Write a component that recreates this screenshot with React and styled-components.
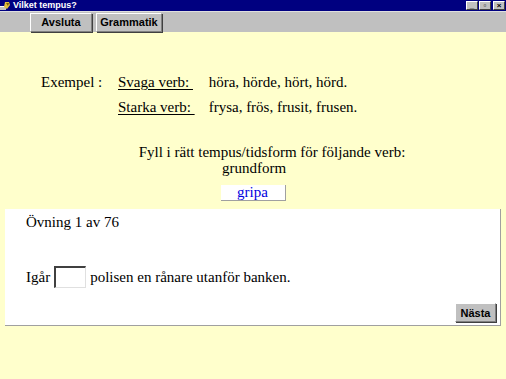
import React, { useState } from 'react';
import styled, { createGlobalStyle } from 'styled-components';

const GlobalStyle = createGlobalStyle`
  html, body { margin: 0; padding: 0; }
  body { background: #ffffcc; overflow: hidden; }
`;

const Window = styled.div`
  width: 506px;
  height: 379px;
  display: flex;
  flex-direction: column;
  background: #ffffcc;
  font-family: "Liberation Serif", "DejaVu Serif", "Times New Roman", serif;
  color: #000;
`;

const TitleBar = styled.div`
  height: 11px;
  background: #000080;
  display: flex;
  align-items: center;
  justify-content: space-between;
  padding: 0 1px 0 0;
  border-bottom: 1px solid #dfdfdf;
`;

const Title = styled.div`
  display: flex;
  align-items: center;
  gap: 2px;
  color: #fff;
  font-family: "Liberation Sans", Arial, sans-serif;
  font-size: 9px;
  font-weight: bold;
  line-height: 11px;
`;

const WinButtons = styled.div`
  display: flex;
  gap: 1px;
`;

const WinButton = styled.div`
  width: 12px;
  height: 9px;
  background: #c0c0c0;
  border-top: 1px solid #fff;
  border-left: 1px solid #fff;
  border-right: 1px solid #404040;
  border-bottom: 1px solid #404040;
  box-sizing: border-box;
  margin-left: ${({ $gap }) => $gap || 0}px;
  display: flex;
  align-items: center;
  justify-content: center;
  font-family: "Liberation Sans", Arial, sans-serif;
  font-size: 8px;
  font-weight: bold;
  line-height: 1;
  color: #000;
`;

const Toolbar = styled.div`
  height: 20px;
  background: #c0c0c0;
  display: flex;
  align-items: center;
  gap: 4px;
  padding-left: 30px;
`;

const ToolButton = styled.button`
  width: ${({ $w }) => $w}px;
  height: 19px;
  box-sizing: border-box;
  background: #c0c0c0;
  border-top: 1px solid #fff;
  border-left: 1px solid #fff;
  border-right: 1px solid #808080;
  border-bottom: 1px solid #808080;
  box-shadow: 1px 1px 0 #404040;
  font-family: "Liberation Sans", Arial, sans-serif;
  font-size: 11px;
  font-weight: bold;
  color: #000;
  padding: 0;
  cursor: pointer;
`;

const Content = styled.div`
  flex: 1;
  display: flex;
  flex-direction: column;
  padding-top: 41px;
  font-family: "Liberation Serif", "DejaVu Serif", "Times New Roman", serif;
  font-size: 15px;
`;

const Examples = styled.div`
  display: grid;
  grid-template-columns: 77px auto 1fr;
  row-gap: 7px;
  padding-left: 41px;
  line-height: 18px;
`;

const Label = styled.span`
  text-decoration: underline;
  text-underline-offset: 2px;
  white-space: pre;
  padding-right: ${({ $pad }) => $pad}px;
`;

const Instruction = styled.div`
  margin-top: 28px;
  display: flex;
  flex-direction: column;
  line-height: 16px;
`;

const InstructionLine = styled.div`
  text-align: center;
  padding-left: ${({ $shift }) => $shift}px;
`;

const WordBox = styled.div`
  align-self: center;
  margin: 9px 0 0 0;
  width: 65px;
  height: 16px;
  box-sizing: border-box;
  background: #fff;
  border-right: 1px solid #a0a0a0;
  border-bottom: 1px solid #a0a0a0;
  color: #0000e0;
  text-align: center;
  line-height: 15px;
`;

const Panel = styled.div`
  margin: 8px 5px 0 5px;
  height: 117px;
  box-sizing: border-box;
  background: #fff;
  border-right: 1px solid #a0a0a0;
  border-bottom: 1px solid #a0a0a0;
  display: flex;
  flex-direction: column;
  padding: 5px 4px 3px 21px;
`;

const Counter = styled.div`
  line-height: 16px;
`;

const Sentence = styled.div`
  margin-top: 36px;
  display: flex;
  align-items: center;
  gap: 4px;
  line-height: 16px;
`;

const Blank = styled.input`
  width: 32px;
  height: 22px;
  box-sizing: border-box;
  border-top: 2px solid #404040;
  border-left: 2px solid #404040;
  border-right: 1px solid #e0e0e0;
  border-bottom: 1px solid #e0e0e0;
  padding: 0;
  outline: none;
  font: inherit;
`;

const Footer = styled.div`
  margin-top: auto;
  display: flex;
  justify-content: flex-end;
`;

const NextButton = styled(ToolButton)`
  height: 19px;
`;

function AppIcon() {
  return (
    <svg width="11" height="10" viewBox="0 0 11 10">
      <rect x="0" y="5" width="6" height="4" fill="#c0c0c0" />
      <rect x="0" y="5" width="6" height="1" fill="#fff" />
      <path d="M5 1 L9 1 L10 4 L7 8 L4 6 Z" fill="#e0c040" />
      <path d="M6 2 L9 2 L8 5 Z" fill="#806000" />
    </svg>
  );
}

export default function App() {
  const [answer, setAnswer] = useState('');
  return (
    <>
      <GlobalStyle />
      <Window>
        <TitleBar>
          <Title>
            <AppIcon />
            Vilket tempus?
          </Title>
          <WinButtons>
            <WinButton>_</WinButton>
            <WinButton>▫</WinButton>
            <WinButton $gap={1}>×</WinButton>
          </WinButtons>
        </TitleBar>
        <Toolbar>
          <ToolButton $w={62}>Avsluta</ToolButton>
          <ToolButton $w={66}>Grammatik</ToolButton>
        </Toolbar>
        <Content>
          <Examples>
            <span>Exempel :</span>
            <Label $pad={14}>Svaga verb: </Label>
            <span>höra, hörde, hört, hörd.</span>
            <span />
            <Label $pad={14}>Starka verb: </Label>
            <span>frysa, frös, frusit, frusen.</span>
          </Examples>
          <Instruction>
            <InstructionLine $shift={38}>Fyll i rätt tempus/tidsform för följande verb:</InstructionLine>
            <InstructionLine $shift={2}>grundform</InstructionLine>
          </Instruction>
          <WordBox>gripa</WordBox>
          <Panel>
            <Counter>Övning 1 av 76</Counter>
            <Sentence>
              Igår
              <Blank value={answer} onChange={(e) => setAnswer(e.target.value)} />
              polisen en rånare utanför banken.
            </Sentence>
            <Footer>
              <NextButton $w={41}>Nästa</NextButton>
            </Footer>
          </Panel>
        </Content>
      </Window>
    </>
  );
}
